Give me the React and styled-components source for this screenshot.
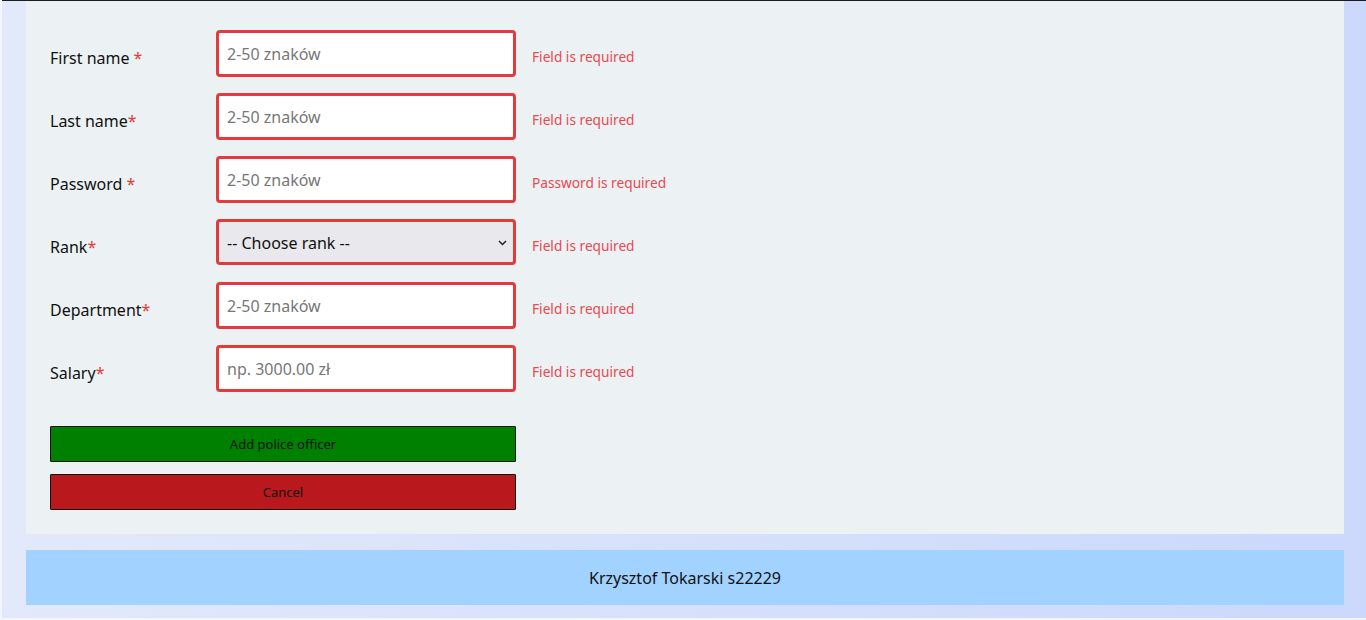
import React from "react";
import styled, { createGlobalStyle } from "styled-components";

const Global = createGlobalStyle`
  html, body { margin: 0; padding: 0; background: #f3f6fd; }
  body { font-family: "Noto Sans", "Open Sans", sans-serif; }
  * { box-sizing: border-box; }
`;

const Page = styled.div`
  margin: 0 0 2px 2px;
  padding: 0 22px 13px 24px;
  background: linear-gradient(to right, #e2e9fb, #cbd8fc);
  border-top: 1px solid #1c1c1c;
  height: 618px;
`;

const Main = styled.main`
  background: #ecf1f4;
  padding: 29px 24px 24px;
`;

const Form = styled.form`
  display: flex;
  flex-direction: column;
`;

const Row = styled.div`
  display: flex;
  align-items: flex-start;
  height: 47px;
  margin-bottom: 16px;
`;

const Label = styled.label`
  width: 166px;
  font-size: 16px;
  color: #111;
  padding-top: 17px;
`;

const Star = styled.span`
  color: #e53935;
  margin-left: ${(p) => (p.$spaced ? "4px" : "0")};
`;

const Input = styled.input`
  width: 300px;
  height: 47px;
  border: 3px solid #e53a3c;
  border-radius: 4px;
  padding: 1px 8px 0;
  font-family: "Noto Sans", sans-serif;
  font-size: 16px;
  background: #fff;
  outline: none;
  &::placeholder { color: #777; }
`;

const SelectWrap = styled.div`
  position: relative;
  width: 300px;
  height: 46px;
`;

const Select = styled.select`
  appearance: none;
  width: 300px;
  height: 46px;
  border: 3px solid #e53a3c;
  border-radius: 4px;
  padding: 2px 8px 0;
  font-family: "Noto Sans", sans-serif;
  font-size: 16px;
  color: #111;
  background: #e9e8ec;
  outline: none;
`;

const Chevron = styled.svg`
  position: absolute;
  right: 9px;
  top: 21px;
  pointer-events: none;
`;

const Error = styled.span`
  margin-left: 16px;
  font-size: 13.7px;
  color: #e84a51;
  padding-top: 17px;
`;

const Buttons = styled.div`
  display: flex;
  flex-direction: column;
  gap: 12px;
  margin-top: 18px;
  width: 466px;
`;

const Button = styled.button`
  height: 36px;
  border: 1px solid #111;
  border-radius: 1px;
  background: ${(p) => p.$bg};
  font-family: "Noto Sans", sans-serif;
  font-size: 13px;
  color: #111;
  cursor: pointer;
`;

const Footer = styled.footer`
  margin-top: 16px;
  height: 55px;
  background: #a2d2ff;
  display: flex;
  align-items: center;
  justify-content: center;
  font-size: 16px;
  color: #111;
`;

const fields = [
  { label: "First name", spaced: true, ph: "2-50 znaków", err: "Field is required" },
  { label: "Last name", ph: "2-50 znaków", err: "Field is required" },
  { label: "Password", spaced: true, ph: "2-50 znaków", err: "Password is required" },
  { label: "Rank", select: true, err: "Field is required" },
  { label: "Department", ph: "2-50 znaków", err: "Field is required" },
  { label: "Salary", ph: "np. 3000.00 zł", err: "Field is required" },
];

export default function App() {
  return (
    <>
      <Global />
      <Page>
        <Main>
          <Form onSubmit={(e) => e.preventDefault()}>
            {fields.map((f) => (
              <Row key={f.label}>
                <Label>
                  {f.label}
                  <Star $spaced={f.spaced}>*</Star>
                </Label>
                {f.select ? (
                  <SelectWrap>
                    <Select defaultValue="">
                      <option value="">-- Choose rank --</option>
                    </Select>
                    <Chevron width="9" height="6" viewBox="0 0 9 6">
                      <path d="M1 1 L4.5 4.5 L8 1" fill="none" stroke="#222" strokeWidth="1.5" />
                    </Chevron>
                  </SelectWrap>
                ) : (
                  <Input type="text" placeholder={f.ph} />
                )}
                <Error>{f.err}</Error>
              </Row>
            ))}
            <Buttons>
              <Button $bg="#008000" type="submit">Add police officer</Button>
              <Button $bg="#b9191c" type="button">Cancel</Button>
            </Buttons>
          </Form>
        </Main>
        <Footer>Krzysztof Tokarski s22229</Footer>
      </Page>
    </>
  );
}
